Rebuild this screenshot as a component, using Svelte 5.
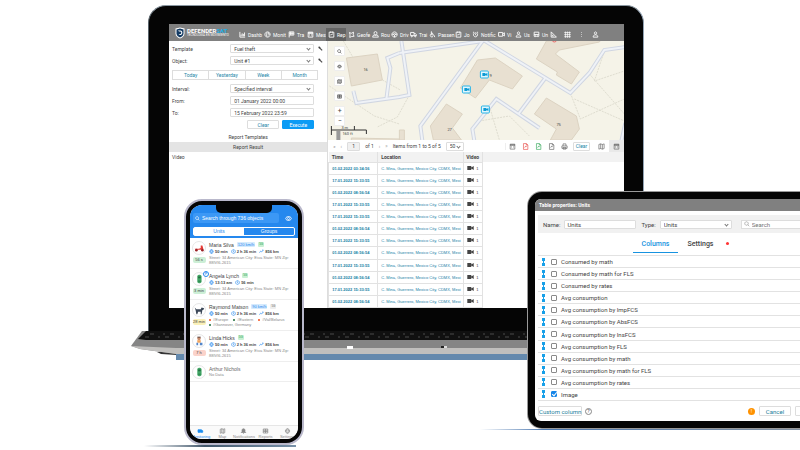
<script>
  const I = {
    chart: 'M3 3v18h18M7 18v-6M11 18V8M15 18v-8M19 18V5',
    globe: 'M12 3a9 9 0 1 0 .1 0M7 6l4 4-3 3 3 6M14 4v5l5 2-4 3',
    flag: 'M4 22V3h16v11H4M9 3v11M14 3v11M4 8h16',
    calendar: 'M4 4h16v17H4zM4 8h16M4 6h16M8 12h2M14 12h2M8 16h2M14 16h2',
    report: 'M4 4h16v17H4zM9 2v4M15 2v4M8 15l3-4 2 2 4-4',
    fence: 'M5 5l6 3 8-4-1 9 3 5-9 1-6 3 1-9z',
    route: 'M2 21l3-7h14l3 7zM12 15c-4-5-5-6-5-8a5 5 0 0 1 10 0c0 2-1 3-5 8z',
    wheel: 'M12 3a9 9 0 1 0 .1 0M12 9a3 3 0 1 0 .1 0M3 11h6M15 11h6M12 15v6',
    truck: 'M2 5h12v11H2zM14 9h5l3 4v3h-8M6 16a2 2 0 1 0 .1 0M18 16a2 2 0 1 0 .1 0',
    seat: 'M8 2v11h8l4 8M8 8h6M5 11c-3 7 3 12 9 8M7 3h2',
    alarm: 'M12 6a7 7 0 1 0 .1 0M12 9v4l3 2M3 6l4-3M21 6l-4-3',
    bell: 'M12 3c-4 0-6 3-6 7v5l-3 3h18l-3-3v-5c0-4-2-7-6-7zM10 21h4',
    video: 'M2 5h14v13H2zM16 10l6-4v11l-6-4',
    user: 'M12 3a4 4 0 1 0 .1 0M4 21c0-5 3-8 8-8s8 3 8 8z',
    bus: 'M4 4h16v14H4zM4 12h16M7 18v3M17 18v3M7 15h2M15 15h2',
    van: 'M2 7h13l6 4v6H2zM6 16v3M17 16v3',
    ruler: 'M4 3v18h18zM8 13v4h5',
    grid: 'M3 4h4v3H3zM10 4h4v3h-4zM17 4h4v3h-4zM3 11h4v3H3zM10 11h4v3h-4zM17 11h4v3h-4zM3 18h4v3H3zM10 18h4v3h-4zM17 18h4v3h-4z',
    dots: 'M12 4v2M12 11v2M12 18v2',
    search: 'M10 3a7 7 0 1 0 .1 0M15 15l6 6',
    eye: 'M1 12c6-9 16-9 22 0-6 9-16 9-22 0zM12 8a4 4 0 1 0 .1 0',
    wrench: 'M4 4l5 1 2 5 9 9-2 2-9-9-5-2z',
    map: 'M3 5l6-2 6 2 6-2v16l-6 2-6-2-6 2zM9 3v16M15 5v16',
    file: 'M5 2h10l5 5v15H5zM9 16l4-6 3 4M15 2v5h5',
    print: 'M7 10V3h10v7M3 10h18v8H3zM7 15h10v6H7z',
    gear: 'M12 8a4 4 0 1 0 .1 0M9 3h6l1 3 3 1 2 5-2 5-3 1-1 3H9l-1-3-3-1-2-5 2-5 3-1z',
    clock: 'M12 3a9 9 0 1 0 .1 0M12 7v6l4 2',
    trend: 'M2 18l6-8 5 4 8-9M15 5h6',
    table: 'M3 4h18v16H3zM3 9h18M3 14h18M12 4v16'
  };
  const nav = [
    ['chart', 'Dashb', 25], ['globe', 'Monit', 24], ['flag', 'Tra', 19], ['calendar', 'Mess', 21],
    ['report', 'Rep', 20], ['fence', 'Geofe', 24], ['route', 'Rou', 19], ['wheel', 'Driv', 19],
    ['truck', 'Trai', 19], ['seat', 'Passen', 26], ['report', 'Jo', 17], ['alarm', 'Notific', 26],
    ['video', 'Vi', 17], ['user', 'Us', 18], ['bus', 'Un', 17]
  ];
  const a = '17.01.2022 15:33:55', b = '01.02.2022 08:56:54';
  const times = ['01.02.2022 03:34:56', a, b, a, a, b, a, b, a, b, a, b];
  const buildings = [
    '347,57 378,53 383,79 352,85',
    '478,59 496,57 523,75 513,88 490,79 476,97 461,87',
    '547,40 537,58 558,71 557,74 572,83 580,71 556,53 560,49 600,41 602,38',
    '547,97 577,115 580,128 572,139 551,139 557,128 535,113',
    '447,103 463,113 453,127 462,139 434,139 431,125',
    '400,129 405,129 405,139 400,139', '352,137 400,138 400,140 352,140'
  ];
  const roads = [
    'M484 39L421 125L423 140', 'M484 39L571 92L590 72L605 49L626 46', 'M546 77L519 113',
    'M540 127L497 98L473 128L475 140', 'M400 52L484 40', 'M402 40L410 94L400 96L357 102L354 90',
    'M400 52L388 57L391 67L387 98', 'M626 122L622 140'
  ];
  const street = 'Street: 34 American City: Eiva State: MN Zip: 88IVI6-2615';
  const units = [
    { name: 'Maria Silva', speed: '120 km/h', pic: 'moto', tag: '56 s', tone: 'green', stats: ['50 min', '2 h 36 min', '856 km'], street },
    { name: 'Angela Lynch', pic: 'car', park: true, tag: '3 min', tone: 'green', stats: ['13:13 am', '56 min'], street },
    { name: 'Raymond Matson', speed: '90 km/h', pic: 'dog', tag: '28 min', tone: 'yellow', stats: ['50 min', '2 h 36 min', '856 km'], tags: [['#Europe', '#f4511e'], ['#Eastern', '#1b6b3a'], ['#Val/Belarus', '#f4511e'], ['#Gannover, Germany', '#1b6b3a']] },
    { name: 'Linda Hicks', pic: 'kid', tag: '7 h', tone: 'red', stats: ['50 min', '2 h 36 min', '856 km'], street }
  ];
  const columns = ['Consumed by math', 'Consumed by math for FLS', 'Consumed by rates', 'Avg consumption', 'Avg consumption by ImpFCS', 'Avg consumption by AbsFCS', 'Avg consumption by InsFCS', 'Avg consumption by FLS', 'Avg consumption by math', 'Avg consumption by math for FLS', 'Avg consumption by rates', 'Image'];
  const tabbar = [['van', 'Monitoring'], ['map', 'Map'], ['bell', 'Notifications'], ['table', 'Reports'], ['gear', 'Settings']];
</script>

{#snippet icon(name)}
  <svg class="ico" viewBox="0 0 24 24" aria-hidden="true"><path d={I[name]} /></svg>
{/snippet}

{#snippet picture(kind)}
  <svg class="pic" viewBox="0 0 14 14" aria-hidden="true">
    {#if kind === 'moto'}
      <path d="M2 8h5l2-1V4h2l1 4v1H3z" fill="#e53935" /><circle cx="4" cy="9.500" r="1.500" fill="#9b2226" /><circle cx="11" cy="9.500" r="1.500" fill="#9b2226" />
    {:else if kind === 'car'}
      <rect x="5" y="2" width="5" height="10" rx="2" fill="#43a867" /><path d="M6 4h3v2H6zM6 9h3v1H6z" fill="#256d43" />
    {:else if kind === 'dog'}
      <path d="M2 4l2 2h5l1-2 3 1-1 2h-1l-1 5H9V9H6l-1 3H4l-1-5z" fill="#3c4858" />
    {:else}
      <circle cx="7" cy="4" r="2" fill="#c98b6b" /><path d="M5 6h4v3H5z" fill="#f0a35c" /><path d="M4 9h2v3H4zM8 9h3v3H8z" fill="#5386c9" /><path d="M5 2h4v1H5z" fill="#4d3a3a" />
    {/if}
  </svg>
{/snippet}

<main class="stage">
  <section class="laptop" aria-label="Reports">
    <div class="screen">
      <header class="topbar">
        <div class="brand">
          <svg viewBox="0 0 20 22" class="shield"><path d="M1 2l9-2 9 2v10c0 5-4 8-9 10-5-2-9-5-9-10z" fill="#fff" /><path d="M3 4l7-2 7 2v8c0 4-3 6-7 8-4-2-7-4-7-8z" fill="#123a63" /><path d="M6 6h5c5 0 5 9 0 9H7l3-2c4 0 3-5 0-5H8z" fill="#fff" /></svg>
          <span><b>DEFENDER<em>SAT</em></b><small>TECNOLOGÍA EN MOVIMIENTO</small></span>
        </div>
        <nav>
          {#each nav as [ic, label, w], i}
            <a href="#{label}" class:on={i === 4} style="width:{w}px">{@render icon(ic)}<span>{label}</span></a>
          {/each}
          <div class="extras">{@render icon('ruler')}{@render icon('grid')}{@render icon('dots')}{@render icon('user')}</div>
        </nav>
      </header>
      <div class="split">
        <form class="panel">
          <div class="row"><label for="tpl">Template</label><span class="sel"><select id="tpl"><option>Fuel theft</option></select></span>{@render icon('wrench')}</div>
          <div class="row"><label for="obj">Object:</label><span class="sel"><select id="obj"><option>Unit #1</option></select></span>{@render icon('wrench')}</div>
          <div class="period">
            {#each ['Today', 'Yesterday', 'Week', 'Month'] as p}<button type="button">{p}</button>{/each}
          </div>
          <div class="row"><label for="int">Interval:</label><span class="sel"><select id="int"><option>Specified interval</option></select></span><i class="gap"></i></div>
          <div class="row"><label for="from">From:</label><input id="from" value="01 January 2022 00:00" /><i class="gap"></i></div>
          <div class="row"><label for="to">To:</label><input id="to" value="15 February 2022 23:59" /><i class="gap"></i></div>
          <div class="actions"><button type="button">Clear</button><button type="button" class="primary">Execute</button></div>
          <p class="cap">Report Templates</p>
          <p class="cap band">Report Result</p>
          <p class="video">Video</p>
        </form>
        <div class="right">
          <div class="map">
            <svg class="terrain" viewBox="328 40 297 99" preserveAspectRatio="xMidYMid slice" aria-hidden="true">
              <rect x="300" y="20" width="360" height="140" fill="#f5f3e8" />
              <g fill="none" stroke="#dfddd0" stroke-dasharray="2 1">
                <path d="M330 85l45 30 25 8M410 94l-12 22-20 10M571 92l10 26 44-20M590 73l35 40M575 98l50 22M605 50l-10 30 30-10M490 105l10 34M480 120l30-5 20 20M344 40l10 17M383 79l18 10" />
              </g>
              {#each buildings as p}<polygon points={p} fill="#e8e0d1" stroke="#dcd3c2" />{/each}
              {#each roads as d}<path {d} fill="none" stroke="#d0d6e2" stroke-width="4" />{/each}
              {#each roads as d}<path {d} fill="none" stroke="#eff2f7" stroke-width="2" />{/each}
              <g class="nums"><text x="364" y="70">16</text><text x="490" y="76">9</text><text x="448" y="130">27</text><text x="557" y="125">75</text></g>
              <circle cx="555" cy="39" r="2" fill="none" stroke="#ef6b6b" />
              {#each [[485, 73], [467, 88], [486, 108]] as [x, y]}
                <rect x={x - 4} y={y - 3} width="8" height="7" rx="1" fill="#e2f6fd" stroke="#27b4e8" />
                <path d="M{x - 2} {y - 1}h3v1l2-1v3l-2-1v1h-3z" fill="#0c9ad4" />
              {/each}
              <path d="M332 125v9M332 129h35M355 125v4M367 129v4" stroke="#333" fill="none" />
              <rect x="337" y="130" width="4" height="10" fill="#999" />
              <g class="nums"><text x="342" y="128">3 m</text><text x="343" y="134">160 ft</text></g>
            </svg>
            <div class="tools">
              <button aria-label="Search">{@render icon('search')}</button><button aria-label="View">{@render icon('eye')}</button><button aria-label="Map">{@render icon('map')}</button><button aria-label="Layers">{@render icon('table')}</button>
              <div class="zoom"><button>+</button><button>−</button></div>
            </div>
          </div>
          <div class="pager">
            <span class="arr">«</span><span class="arr">‹</span><input aria-label="Page" value="1" /><span>of 1</span><span class="arr">›</span><span class="arr">»</span>
            <span>Items from 1 to 5 of 5</span><span class="sel"><select aria-label="Per page"><option>50</option></select></span>
            <div class="export">{@render icon('calendar')}<i class="crimson">{@render icon('file')}</i><i class="grn">{@render icon('file')}</i>{@render icon('file')}{@render icon('print')}</div>
            <button>Clear</button><div class="views">{@render icon('map')}<i>{@render icon('calendar')}</i></div>
          </div>
          <div class="grid">
            <table>
              <thead><tr><th class="t">Time</th><th class="l">Location</th><th class="v">Video</th><th></th></tr></thead>
              <tbody>
                {#each times as t}
                  <tr><td>{t}</td><td>C. Mina, Guerrero, Mexico City, CDMX, Mexi</td><td><svg class="cam" viewBox="0 0 8 5"><path d="M0 0h5v5H0zM5 2l3-2v5L5 3z" fill="#444" /></svg>1</td><td class="none"></td></tr>
                {/each}
              </tbody>
            </table>
          </div>
        </div>
      </div>
    </div>
  </section>

  <svg class="base" viewBox="130 331 400 30" preserveAspectRatio="none" aria-hidden="true">
    <path d="M157 352h20v3l-16-1z" fill="#333" />
    <path d="M142 331H530V354H176L140 349l-9-3z" fill="#858585" />
    <path d="M131 346l45 2H530v6H176l-36-5z" fill="#c0bfbd" />
    <path d="M147 330H530v10H146l-8-1z" fill="#101010" />
    <path d="M150 334H530M145 337H530" stroke="#4a4a4a" stroke-dasharray="4 9 2 5" />
    <path d="M176 354H530v6H176z" fill="#6489ad" />
    <rect x="347" y="346" width="6" height="3" fill="#fff" /><rect x="441" y="346" width="6" height="2" fill="#ddd" /><rect x="441" y="346" width="3" height="2" fill="#222" />
  </svg>
  <div class="shadow one"></div>
  <div class="shadow two"></div>

  <section class="phone" aria-label="Units">
    <div class="pscreen">
      <div class="notch"></div>
      <header>
        <div class="find"><label>{@render icon('search')}<input aria-label="Search" placeholder="Search through 736 objects" /></label>{@render icon('eye')}</div>
        <div class="seg"><button class="on">Units</button><button>Groups</button></div>
      </header>
      <ul>
        {#each units as u}
          <li>
            <div class="side"><span class="av">{@render picture(u.pic)}{#if u.park}<b class="park">P</b>{/if}</span><span class="tag {u.tone}">{u.tag}</span></div>
            <div class="info">
              <p class="name">{u.name}{#if u.speed}<i class="spd">{u.speed}</i>{/if}<i class="chip" class:grey={u.pic === 'dog'}>5G</i></p>
              <p class="stats">{#each u.stats as s, i}<span>{@render icon(['gear', 'clock', 'trend'][i])}{s}</span>{/each}</p>
              {#if u.tags}
                <p class="addr tags">{#each u.tags as [t, c]}<span><i class="dot" style="background:{c}"></i>{t}</span>{/each}</p>
              {:else}<p class="addr">{u.street}</p>{/if}
            </div>
          </li>
        {/each}
        <li class="last"><div class="side"><span class="av">{@render picture('car')}</span></div><div class="info"><p class="name">Arthur Nichols</p><p class="addr">No Data</p></div></li>
      </ul>
      <nav>{#each tabbar as [ic, t], i}<a href="#{t}" class:on={i === 0}>{@render icon(ic)}{t}</a>{/each}</nav>
    </div>
  </section>

  <section class="tablet" aria-label="Table properties">
    <div class="tscreen">
      <h1>Table properties: Units</h1>
      <div class="bar">
        <label for="nm">Name:</label><input id="nm" value="Units" />
        <label for="ty" class="ty">Type:</label><span class="sel"><select id="ty"><option>Units</option></select></span>
        <div class="srch">{@render icon('search')}<input aria-label="Search columns" placeholder="Search" /></div>
      </div>
      <div class="tabs"><button class="on">Columns</button><button>Settings</button><span class="mark"></span></div>
      <ul>
        {#each columns as c, i}
          <li><svg class="drag" viewBox="0 0 3 8"><path d="M0 0h3v3H0zM1 3h1v2H1zM0 5h3v3H0z" fill="#18a0e8" /></svg><label><input type="checkbox" checked={i === 11} />{c}</label></li>
        {/each}
      </ul>
      <footer><button>Custom column</button><span class="q">?</span><span class="warn">!</span><button class="cancel">Cancel</button><button class="ok" aria-label="Save"></button></footer>
    </div>
  </section>
</main>

<style>
  :global(body) { margin: 0; background: #fff; }
  .stage, .stage * { box-sizing: border-box; }
  .stage { position: relative; min-height: 450px; overflow: hidden; font: 5px/6px Roboto, "Liberation Sans", sans-serif; color: #444; }
  p, ul, h1 { margin: 0; padding: 0; }
  ul { list-style: none; }
  a { color: inherit; text-decoration: none; }
  i, em { font-style: normal; }
  button, input, select { font: inherit; color: inherit; margin: 0; padding: 0; border: 1px solid #ddd; border-radius: 1px; background: #fff; min-width: 0; outline: 0; white-space: nowrap; }
  select { appearance: none; width: 100%; height: 100%; padding-left: 3px; }
  .sel { position: relative; display: block; }
  .sel::after { content: ""; position: absolute; right: 4px; top: 3px; width: 2px; height: 2px; border: solid #777; border-width: 0 1px 1px 0; transform: rotate(45deg); }
  .ico { width: 7px; height: 7px; flex: none; fill: none; stroke: currentColor; stroke-width: 3; display: block; }

  .laptop { position: absolute; left: 18.5%; width: 62%; top: 5px; padding: 18px 19px 25px 20px; background: #050505; border-radius: 18px 18px 0 0; border-top: 1px solid #8b98a2; border-right: 1px solid #92a3b4; border-left: 1px solid #58636b; }
  .screen { height: 284px; background: #fff; overflow: hidden; display: flex; flex-direction: column; }
  .topbar { height: 17px; flex: none; background: #808080; color: #fff; display: flex; overflow: hidden; }
  .brand { width: 68px; flex: none; display: flex; align-items: center; gap: 2px; padding-left: 6px; }
  .shield { width: 10px; height: 12px; flex: none; }
  .brand b { display: block; font: bold 6px/6px Roboto, sans-serif; color: #fff; }
  .brand em { color: #1fb0e6; }
  .brand small { display: block; font-size: 3px; line-height: 3px; white-space: nowrap; }
  nav { display: flex; }
  .topbar nav { flex: 1; min-width: 0; padding-top: 4px; }
  .topbar nav a { flex: none; display: flex; gap: 2px; align-items: center; padding-left: 2px; white-space: nowrap; height: 13px; }
  .topbar nav a.on { background: #626262; }
  .extras { display: flex; gap: 7px; padding: 3px 0 0 2px; }
  .split { flex: 1; display: flex; min-height: 0; }
  .panel { width: 35%; display: flex; flex-direction: column; padding-top: 3px; border-right: 1px solid #ddd; }
  .row { display: flex; align-items: center; height: 9px; margin-bottom: 3px; padding: 0 4px 0 3px; }
  .row label { flex: 1; }
  .row > input, .row > .sel { width: 84px; height: 9px; }
  .row > input { padding-left: 3px; }
  .row .ico, .gap { width: 5px; margin-left: 4px; fill: #444; }
  .period { display: flex; margin: 2px 9px 4px 3px; height: 10px; }
  .period button { flex: 1; color: #1d86a8; border-radius: 0; margin-left: -1px; }
  .period button:first-child { margin-left: 0; }
  .actions { display: flex; justify-content: flex-end; gap: 3px; padding: 0 13px 0 0; height: 9px; margin-bottom: 4px; }
  .actions button { width: 32px; color: #1d86a8; }
  .actions .primary { background: #0a9bf5; border-color: #0a9bf5; color: #fff; }
  .cap { text-align: center; height: 9px; line-height: 8px; }
  .band { background: #e4e4e4; height: 10px; line-height: 10px; }
  .video { padding: 2px 3px; }
  .right { flex: 1; min-width: 0; display: flex; flex-direction: column; }
  .map { position: relative; height: 99px; flex: none; overflow: hidden; }
  .terrain { width: 100%; height: 100%; display: block; }
  .nums { font: 4px Roboto, sans-serif; fill: #444; }
  .tools { position: absolute; left: 6px; top: 5px; display: flex; flex-direction: column; gap: 5px; }
  .tools button { width: 11px; height: 10px; padding: 0; display: grid; place-items: center; border-color: #eee; line-height: 5px; }
  .tools .ico { width: 5px; height: 5px; }
  .zoom button { font-size: 7px; }
  .pager { height: 12px; flex: none; display: flex; align-items: center; gap: 5px; padding-left: 5px; white-space: nowrap; }
  .pager .arr { color: #999; }
  .pager > input { width: 13px; height: 9px; background: #f0f0f0; text-align: center; flex: none; }
  .pager .sel { width: 18px; height: 9px; flex: none; }
  .pager .ico { color: #555; stroke-width: 2; }
  .export { display: flex; gap: 6px; margin-left: auto; border-left: 1px solid #eee; padding-left: 3px; }
  .export .crimson .ico { color: #e53935; }
  .export .grn .ico { color: #21a14a; }
  .pager > button { width: 17px; height: 9px; color: #1d86a8; flex: none; }
  .views { display: flex; align-items: center; gap: 4px; height: 12px; margin-left: 3px; }
  .views i { background: #e9e9e9; padding: 3px 4px; }
  .grid { flex: 1; min-height: 0; }
  table { border-collapse: collapse; width: 100%; height: 100%; table-layout: fixed; font: 4px/5px "Liberation Sans", Arial, sans-serif; }
  th { height: 10px; background: #f2f2f2; text-align: left; padding: 0 3px; border: 1px solid #e2e2e2; border-width: 0 1px 0 0; font: bold 5px/8px Roboto, sans-serif; }
  th:last-child { border: 0; }
  .t { width: 49px; } .l { width: 86px; } .v { width: 19px; padding: 0 2px; }
  td { padding: 0 0 0 3px; border: 1px solid #e2e2e2; white-space: nowrap; overflow: hidden; color: #1780a5; }
  td:first-child { font-weight: bold; }
  td:nth-child(3) { color: #444; }
  td.none { border: 0; }
  .cam { width: 7px; height: 4px; margin-right: 2px; }

  .base { position: absolute; left: 16.25%; width: 50%; top: 331px; height: 30px; }
  .shadow { position: absolute; height: 2px; }
  .one { left: 18%; width: 19%; top: 445px; background: linear-gradient(90deg, #fff, #42586c 40%, #7892aa); }
  .two { left: 60%; right: 0; top: 429px; height: 1px; background: linear-gradient(90deg, #fff, #4b78b0 20%, #8493a4); }

  .phone { position: absolute; left: 23%; width: 15%; top: 199px; height: 246px; border: 2px solid #b9b8cb; border-radius: 18px; background: #050505; padding: 4px; }
  .pscreen { position: relative; height: 100%; border-radius: 12px; background: #fff; overflow: hidden; display: flex; flex-direction: column; font-family: "Liberation Sans", sans-serif; }
  .notch { position: absolute; top: -1px; left: 24%; right: 24%; height: 9px; background: #050505; border-radius: 0 0 5px 5px; }
  .phone header { background: #2588ee; height: 33px; padding: 8px 3px 2px; display: flex; flex-direction: column; gap: 4px; flex: none; }
  .find { display: flex; align-items: center; gap: 6px; color: #fff; padding-right: 3px; }
  .find label { flex: 1; display: flex; align-items: center; gap: 2px; background: #3c98f5; border-radius: 2px; height: 10px; padding-left: 2px; min-width: 0; }
  .find label .ico { width: 5px; }
  .find input { flex: 1; border: 0; background: none; }
  .find input::placeholder { color: #fff; opacity: 1; }
  .seg { display: flex; border: 1px solid #fff; border-radius: 2px; height: 9px; }
  .seg button { flex: 1; border: 0; background: none; color: #fff; font-size: 5px; line-height: 5px; border-radius: 0; }
  .seg .on { background: #fff; color: #2588ee; }
  .phone ul { flex: 1; min-height: 0; overflow: hidden; }
  .phone li { display: flex; gap: 3px; height: 31px; padding: 3px 2px 0; border-bottom: 1px solid #eee; }
  .phone .last { height: 20px; color: #666; }
  .side { width: 14px; flex: none; display: flex; flex-direction: column; align-items: center; gap: 2px; }
  .av { position: relative; width: 14px; height: 14px; flex: none; border: 1px solid #e6e6e6; border-radius: 50%; }
  .pic { width: 12px; height: 12px; display: block; }
  .park { position: absolute; right: -4px; top: -2px; width: 6px; height: 6px; border: 1px solid #2588ee; border-radius: 50%; background: #fff; color: #2588ee; font-size: 3px; line-height: 4px; text-align: center; }
  .tag { width: 13px; height: 6px; font-size: 4px; line-height: 6px; text-align: center; border-radius: 2px; white-space: nowrap; }
  .green { background: #ccefd6; } .yellow { background: #fbf1b8; } .red { background: #fbd3ca; }
  .info { flex: 1; min-width: 0; }
  .name { display: flex; align-items: center; gap: 3px; height: 7px; white-space: nowrap; }
  .spd, .chip { font-size: 4px; line-height: 5px; padding: 0 1px; border-radius: 1px; background: #d5eafd; color: #2588ee; }
  .chip { background: #c8f0d3; color: #279a4b; font-size: 3px; }
  .chip.grey { background: #eee; color: #666; }
  .stats { display: flex; gap: 3px; height: 7px; align-items: center; font-size: 4px; font-weight: bold; white-space: nowrap; }
  .stats span { display: flex; align-items: center; gap: 1px; }
  .stats .ico { width: 5px; height: 5px; color: #2588ee; }
  .addr { font-size: 4px; line-height: 5px; color: #888; }
  .tags { display: flex; flex-wrap: wrap; column-gap: 5px; }
  .tags span { display: flex; align-items: center; gap: 2px; }
  .dot { width: 2px; height: 2px; border-radius: 50%; }
  .phone nav { height: 14px; flex: none; border-top: 1px solid #e6e6e6; background: #fafafa; }
  .phone nav a { flex: 1; width: 0; display: flex; flex-direction: column; align-items: center; gap: 1px; padding-top: 2px; font-size: 4px; line-height: 4px; color: #888; }
  .phone nav .ico { height: 6px; }
  .phone nav .on { color: #1b8df0; }
  .phone nav .on .ico, .phone nav a:nth-child(3) .ico { fill: currentColor; }

  .tablet { position: absolute; left: 66%; right: -30px; top: 192px; border: solid #050505; border-width: 7px; border-radius: 14px; background: #050505; box-shadow: 0 0 0 1px #9a9a9a; font: 6px/7px Roboto, "Liberation Sans", sans-serif; }
  .tscreen { background: #fff; border-radius: 6px; overflow: hidden; height: 222px; display: flex; flex-direction: column; }
  h1 { height: 12px; flex: none; background: #808080; color: #fff; font: bold 5px/12px Roboto, sans-serif; padding-left: 4px; }
  .bar { margin: 4px 3px 0; height: 18px; flex: none; background: #f1f1f1; display: flex; align-items: center; padding-left: 5px; }
  .bar > input, .bar > .sel, .srch { height: 9px; width: 72px; flex: none; }
  .bar > input { padding-left: 2px; margin-left: 4px; }
  .bar .ty { margin: 0 4px 0 5px; }
  .srch { margin-left: 9px; background: #fff; border: 1px solid #ddd; display: flex; align-items: center; gap: 2px; padding-left: 2px; color: #777; }
  .srch input { border: 0; height: 7px; }
  .srch .ico { width: 6px; height: 6px; stroke-width: 2; }
  .tabs { display: flex; height: 22px; flex: none; padding: 0 0 2px 98px; }
  .tabs button { border: 0; border-radius: 0; width: 45px; padding-top: 2px; font: 500 7px/8px Roboto, sans-serif; border-bottom: 1px solid transparent; }
  .tabs .on { color: #1893e0; border-color: #1893e0; }
  .mark { width: 3px; height: 3px; border-radius: 50%; background: #f33; margin: 9px 0 0 3px; }
  .tablet ul { flex: 1; min-height: 0; display: flex; flex-direction: column; margin: 0 3px; border-top: 1px solid #e2e2e2; }
  .tablet li { flex: 1; display: flex; align-items: center; gap: 6px; padding-left: 4px; border-bottom: 1px solid #e2e2e2; }
  .drag { width: 3px; height: 8px; }
  .tablet li label { display: flex; align-items: center; gap: 4px; }
  .tablet li input { appearance: none; width: 6px; height: 6px; border: 1px solid #8a8a8a; }
  .tablet li input:checked { background: #1686e8; border-color: #1686e8; position: relative; }
  .tablet li input:checked::after { content: ""; position: absolute; left: 1px; top: -1px; width: 2px; height: 4px; border: solid #fff; border-width: 0 1px 1px 0; transform: rotate(40deg); }
  footer { height: 20px; flex: none; display: flex; align-items: center; padding: 0 4px 0 3px; gap: 3px; }
  footer button { width: 44px; height: 10px; color: #1d7f9c; }
  footer .cancel { width: 32px; margin-left: 1px; }
  footer .ok { width: 24px; margin-left: 1px; }
  .q, .warn { width: 7px; height: 7px; border-radius: 50%; font-size: 5px; line-height: 7px; text-align: center; }
  .q { border: 1px solid #888; line-height: 5px; }
  .warn { margin-left: auto; background: #ff9200; color: #fff; }
</style>
